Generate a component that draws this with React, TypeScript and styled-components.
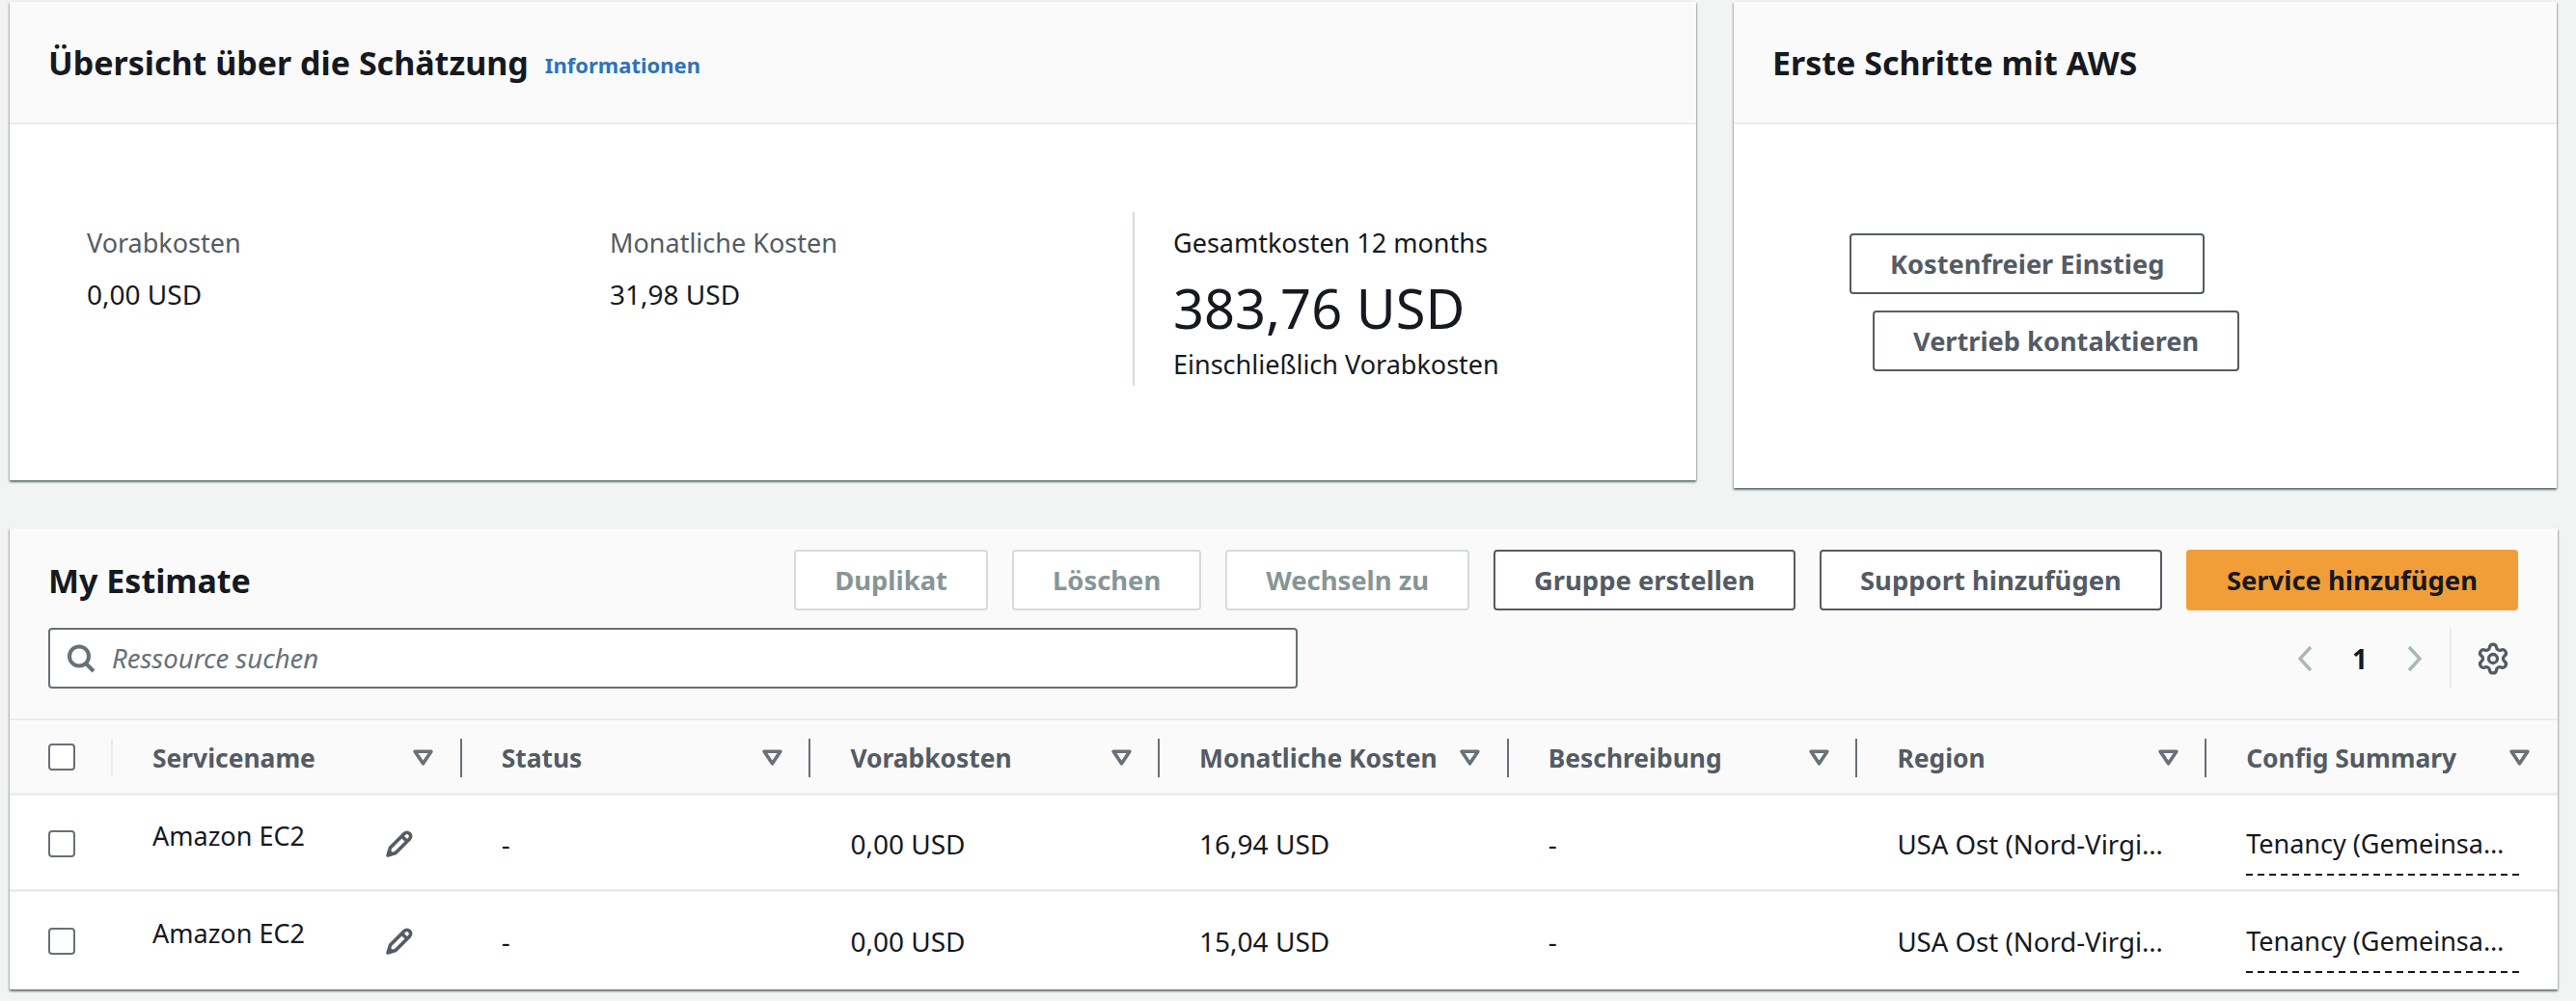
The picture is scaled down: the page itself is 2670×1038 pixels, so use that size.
import React from 'react';
import styled, { createGlobalStyle } from 'styled-components';
import { Settings } from 'lucide-react';

const GlobalStyle = createGlobalStyle`
  html, body {
    margin: 0;
    padding: 0;
    background: #f2f3f3;
    color: #16191f;
    font-family: "Noto Sans", "Open Sans", sans-serif;
  }
`;

const services = [
  { name: 'Amazon EC2', monthly: '16,94 USD' },
  { name: 'Amazon EC2', monthly: '15,04 USD' },
];

const columns = ['Servicename', 'Status', 'Vorabkosten', 'Monatliche Kosten', 'Beschreibung', 'Region', 'Config Summary'];

const SortIcon = () => (
  <SortSvg viewBox="0 0 20 16">
    <path d="M2 2h16l-8 12z" fill="none" stroke="#687078" strokeWidth="3.4" strokeLinejoin="round" />
  </SortSvg>
);

const PencilIcon = () => (
  <PencilSvg viewBox="0 0 30 30">
    <path
      d="M3 27l2.500-8L20 4.500a3.600 3.600 0 0 1 5.500 5.500L11 24.500z M17.500 7l5.500 5.500"
      fill="none"
      stroke="#545b64"
      strokeWidth="3.600"
      strokeLinejoin="round"
    />
    <path d="M2.500 27.500l2-7 5 5z" fill="#545b64" />
  </PencilSvg>
);

const SearchIcon = () => (
  <SearchSvg viewBox="0 0 30 30">
    <circle cx="13" cy="12.500" r="10" fill="none" stroke="#687078" strokeWidth="4" />
    <path d="M20 20l8 8" stroke="#687078" strokeWidth="4" />
  </SearchSvg>
);

const Chevron = ({ dir }: { dir: 'left' | 'right' }) => (
  <ChevronSvg viewBox="0 0 16 28">
    <path d={dir === 'left' ? 'M14 2L3 14l11 12' : 'M2 2l11 12L2 26'} fill="none" stroke="#aab7b8" strokeWidth="3.400" />
  </ChevronSvg>
);

export default function App() {
  return (
    <>
      <GlobalStyle />
      <Page>
        <TopRow>
          <SummaryCard>
            <CardHeader>
              <CardTitle>Übersicht über die Schätzung</CardTitle>
              <InfoLink>Informationen</InfoLink>
            </CardHeader>
            <SummaryBody>
              <SummaryCell>
                <Label>Vorabkosten</Label>
                <Value>0,00 USD</Value>
              </SummaryCell>
              <SummaryCell>
                <Label>Monatliche Kosten</Label>
                <Value>31,98 USD</Value>
              </SummaryCell>
              <TotalCell>
                <TotalLabel>Gesamtkosten 12 months</TotalLabel>
                <TotalValue>383,76 USD</TotalValue>
                <TotalNote>Einschließlich Vorabkosten</TotalNote>
              </TotalCell>
            </SummaryBody>
          </SummaryCard>
          <StartCard>
            <CardHeader>
              <CardTitle>Erste Schritte mit AWS</CardTitle>
            </CardHeader>
            <StartBody>
              <StartButton $offset={120}>Kostenfreier Einstieg</StartButton>
              <StartButton $offset={144}>Vertrieb kontaktieren</StartButton>
            </StartBody>
          </StartCard>
        </TopRow>

        <TableCard>
          <Toolbar>
            <ToolbarTop>
              <CardTitle>My Estimate</CardTitle>
              <Actions>
                <ActionButton disabled>Duplikat</ActionButton>
                <ActionButton disabled>Löschen</ActionButton>
                <ActionButton disabled>Wechseln zu</ActionButton>
                <ActionButton>Gruppe erstellen</ActionButton>
                <ActionButton>Support hinzufügen</ActionButton>
                <PrimaryButton>Service hinzufügen</PrimaryButton>
              </Actions>
            </ToolbarTop>
            <ToolbarBottom>
              <SearchBox>
                <SearchIcon />
                <SearchText>Ressource suchen</SearchText>
              </SearchBox>
              <Pager>
                <Chevron dir="left" />
                <PageNumber>1</PageNumber>
                <Chevron dir="right" />
                <PagerDivider />
                <Settings size={36} color="#545b64" strokeWidth={2.2} />
              </Pager>
            </ToolbarBottom>
          </Toolbar>

          <HeadRow>
            <CheckCell>
              <Checkbox />
              <HeadDivider $light />
            </CheckCell>
            {columns.map((column, i) => (
              <HeadCell key={column}>
                <HeadText>{column}</HeadText>
                <SortIcon />
                {i < columns.length - 1 && <HeadDivider />}
              </HeadCell>
            ))}
          </HeadRow>

          {services.map((service) => (
            <BodyRow key={service.monthly}>
              <CheckCell>
                <Checkbox />
              </CheckCell>
              <NameCell>
                <ServiceName>{service.name}</ServiceName>
                <PencilIcon />
              </NameCell>
              <BodyCell>-</BodyCell>
              <BodyCell>0,00 USD</BodyCell>
              <BodyCell>{service.monthly}</BodyCell>
              <BodyCell>-</BodyCell>
              <BodyCell>
                <RegionText>USA Ost (Nord-Virginia)</RegionText>
              </BodyCell>
              <BodyCell>
                <ConfigSummary>Tenancy (Gemeinsame Instances)</ConfigSummary>
              </BodyCell>
            </BodyRow>
          ))}
        </TableCard>
      </Page>
    </>
  );
}

const Page = styled.div`
  width: 2670px;
  height: 1038px;
  box-sizing: border-box;
  padding: 2px 19px 0 10px;
  overflow: hidden;
`;

const TopRow = styled.div`
  display: flex;
  align-items: flex-start;
  gap: 39px;
`;

const Card = styled.section`
  background: #fff;
  box-shadow: 0 2px 2px 0 rgba(0, 28, 36, 0.5), 1px 1px 2px 0 rgba(0, 28, 36, 0.15), -1px 1px 2px 0 rgba(0, 28, 36, 0.15);
`;

const SummaryCard = styled(Card)`
  width: 1748px;
  height: 496px;
`;

const StartCard = styled(Card)`
  width: 853px;
  height: 504px;
`;

const CardHeader = styled.header`
  height: 127px;
  box-sizing: border-box;
  padding: 0 39px 0 40px;
  display: flex;
  align-items: center;
  gap: 17px;
  background: #fafafa;
  border-bottom: 2px solid #eaeded;
`;

const CardTitle = styled.h2`
  margin: 0;
  font-size: 34px;
  line-height: 42px;
  font-weight: 700;
  color: #16191f;
`;

const InfoLink = styled.a`
  font-size: 22px;
  font-weight: 700;
  color: #2e73b8;
  padding-top: 4px;
`;

const SummaryBody = styled.div`
  display: grid;
  grid-template-columns: 542px 542px 1fr;
  padding: 91px 0 0 80px;
`;

const SummaryCell = styled.div`
  display: flex;
  flex-direction: column;
  padding-top: 14px;
`;

const Label = styled.div`
  font-size: 27px;
  line-height: 36px;
  color: #545b64;
`;

const Value = styled.div`
  font-size: 28px;
  line-height: 36px;
  margin-top: 17px;
  color: #16191f;
`;

const TotalCell = styled.div`
  height: 180px;
  box-sizing: border-box;
  padding: 14px 0 0 40px;
  border-left: 2px solid #d5dbdb;
`;

const TotalLabel = styled.div`
  font-size: 27px;
  line-height: 36px;
`;

const TotalValue = styled.div`
  font-size: 56px;
  line-height: 70px;
  margin-top: 14px;
`;

const TotalNote = styled.div`
  font-size: 27px;
  line-height: 36px;
  margin-top: 6px;
`;

const StartBody = styled.div`
  display: flex;
  flex-direction: column;
  align-items: flex-start;
  gap: 17px;
  padding-top: 113px;
`;

const StartButton = styled.button<{ $offset: number }>`
  height: 63px;
  margin-left: ${(p) => p.$offset}px;
  padding: 0 40px;
  background: #fff;
  border: 2px solid #545b64;
  border-radius: 4px;
  font: 700 27.2px "Noto Sans", sans-serif;
  color: #545b64;
`;

const TableCard = styled(Card)`
  width: 2641px;
  height: 478px;
  margin-top: 42px;
`;

const Toolbar = styled.div`
  height: 199px;
  box-sizing: border-box;
  padding: 22px 41px 0 40px;
  background: #fafafa;
  border-bottom: 2px solid #eaeded;
`;

const ToolbarTop = styled.div`
  display: flex;
  align-items: center;
  justify-content: space-between;
  height: 63px;
`;

const Actions = styled.div`
  display: flex;
  gap: 25px;
`;

const ActionButton = styled.button`
  height: 63px;
  padding: 0 40px;
  background: #fff;
  border: 2px solid ${(p) => (p.disabled ? '#d5dbdb' : '#545b64')};
  border-radius: 4px;
  font: 700 27.4px "Noto Sans", sans-serif;
  color: ${(p) => (p.disabled ? '#879596' : '#545b64')};
`;

const PrimaryButton = styled(ActionButton)`
  background: #f29e38;
  border-color: #f29e38;
  color: #16191f;
`;

const ToolbarBottom = styled.div`
  display: flex;
  align-items: flex-start;
  justify-content: space-between;
  margin-top: 18px;
`;

const SearchBox = styled.div`
  width: 1295px;
  height: 63px;
  box-sizing: border-box;
  display: flex;
  align-items: center;
  gap: 17px;
  padding-left: 17px;
  background: #fff;
  border: 2px solid #687078;
  border-radius: 4px;
`;

const SearchSvg = styled.svg`
  width: 30px;
  height: 30px;
`;

const SearchText = styled.span`
  font-size: 27.5px;
  font-style: italic;
  color: #687078;
`;

const Pager = styled.div`
  display: flex;
  align-items: center;
  height: 63px;
  margin-right: 8px;
`;

const ChevronSvg = styled.svg`
  width: 16px;
  height: 28px;
`;

const PageNumber = styled.span`
  width: 98px;
  text-align: center;
  font-size: 28px;
  font-weight: 700;
`;

const PagerDivider = styled.div`
  width: 2px;
  height: 63px;
  margin: 0 25px 0 28px;
  background: #eaeded;
`;

const HeadRow = styled.div`
  display: grid;
  grid-template-columns: 107px repeat(6, 361.7px) 1fr;
  height: 78px;
  box-sizing: border-box;
  background: #fafafa;
  border-bottom: 3px solid #eaeded;
`;

const CheckCell = styled.div`
  position: relative;
  display: flex;
  align-items: center;
  padding-left: 40px;
`;

const Checkbox = styled.span`
  width: 28px;
  height: 28px;
  box-sizing: border-box;
  background: #fff;
  border: 2px solid #687078;
  border-radius: 4px;
`;

const HeadCell = styled.div`
  position: relative;
  display: flex;
  align-items: center;
  justify-content: space-between;
  padding: 2px 29.5px 0 41px;
`;

const HeadText = styled.span`
  font-size: 26.4px;
  font-weight: 700;
  color: #545b64;
`;

const HeadDivider = styled.span<{ $light?: boolean }>`
  position: absolute;
  right: 0;
  top: 19px;
  width: 2px;
  height: 40px;
  background: ${(p) => (p.$light ? '#eaeded' : '#687078')};
`;

const SortSvg = styled.svg`
  width: 21px;
  height: 17px;
`;

const BodyRow = styled.div`
  display: grid;
  grid-template-columns: 107px repeat(6, 361.7px) 1fr;
  height: 100px;
  padding-top: 3px;
  box-sizing: border-box;
  background: #fff;
  border-bottom: 3px solid #eaeded;

  &:last-child {
    height: 101px;
    padding-top: 1px;
    border-bottom: 0;
  }
`;

const NameCell = styled.div`
  display: flex;
  align-items: center;
  justify-content: space-between;
  padding: 0 50px 0 41px;
`;

const ServiceName = styled.span`
  font-size: 27px;
  padding-bottom: 18px;
`;

const PencilSvg = styled.svg`
  width: 30px;
  height: 30px;
`;

const BodyCell = styled.div`
  display: flex;
  align-items: center;
  min-width: 0;
  padding: 0 39px 0 41px;
  font-size: 28px;
`;

const Truncated = styled.span`
  white-space: nowrap;
  overflow: hidden;
  text-overflow: ellipsis;
`;

const RegionText = styled(Truncated)`
  font-size: 27.6px;
`;

const ConfigSummary = styled(Truncated)`
  display: block;
  width: 272px;
  padding: 0 11px 15px 0;
  margin-top: 13px;
  font-size: 27px;
  background: linear-gradient(to right, #16191f 7px, transparent 7px) left bottom / 12px 2px repeat-x;
`;
